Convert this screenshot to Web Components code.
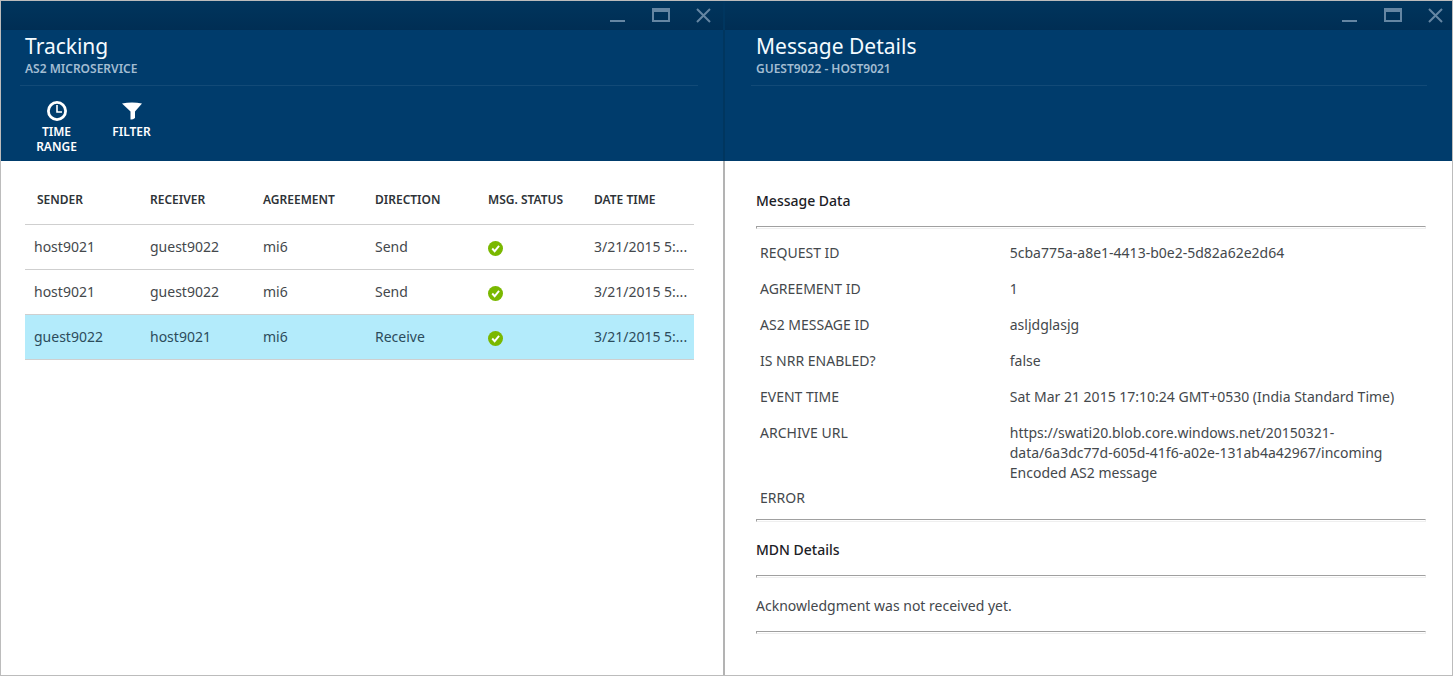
<!DOCTYPE html>
<html lang="en">
<head>
<meta charset="utf-8">
<title>Tracking</title>
<style>
  body { margin: 0; font-family: "Noto Sans", "Open Sans", sans-serif; font-size: 14px; line-height: 20px; color: #44484c; background: #fff; }
</style>
</head>
<body>
<portal-shell>
  <portal-blade heading="Tracking" subheading="AS2 MICROSERVICE" class="list">
    <command-button slot="commands" icon="clock">TIME RANGE</command-button>
    <command-button slot="commands" icon="filter">FILTER</command-button>
    <tracking-grid></tracking-grid>
  </portal-blade>
  <portal-blade heading="Message Details" subheading="GUEST9022 - HOST9021" class="details">
    <detail-section heading="Message Data"><message-data></message-data></detail-section>
    <detail-section heading="MDN Details"><mdn-status>Acknowledgment was not received yet.</mdn-status></detail-section>
  </portal-blade>
</portal-shell>

<script>
function define(name, render) {
  customElements.define(name, class extends HTMLElement {
    constructor() {
      super();
      this.attachShadow({ mode: 'open' }).innerHTML = render(this);
    }
  });
}

define('portal-shell', () => `
  <style>
    :host { display: flex; box-sizing: border-box; min-height: 100vh; border: 1px solid #bcbcbc; }
    ::slotted(portal-blade) { min-width: 0; flex: 727 1 0; }
    ::slotted(.list) { flex-grow: 724; --edge: 2px; --end: 29px; --controls-end: 12px; }
    ::slotted(.details) { --start: 31px; --end: 26px; --controls-end: 9px; --top: 30px; }
  </style>
  <slot></slot>`);

define('window-controls', () => `
  <style>
    :host { display: flex; justify-content: flex-end; align-items: center; gap: 26px; height: 29px; padding-right: var(--controls-end, 12px); background: linear-gradient(#00355d, #002e54); }
    button { display: block; padding: 0; border: 0; background: none; color: #6586a3; }
    svg { display: block; fill: none; stroke: currentColor; }
  </style>
  <button type="button" aria-label="Minimize"><svg width="17" height="16"><path d="M1 13h15" stroke-width="2"/></svg></button>
  <button type="button" aria-label="Maximize"><svg width="18" height="16"><path d="M1 1v12h16V1" stroke-width="2"/><path d="M0 2h18" stroke-width="4"/></svg></button>
  <button type="button" aria-label="Close"><svg width="15" height="16"><path d="M1 1l13 13M14 1L1 14" stroke-width="2"/></svg></button>`);

define('portal-blade', el => `
  <style>
    :host { display: flex; flex-direction: column; }
    header { background: #003c6c; border-right: var(--edge, 0px) solid #00365f; min-height: 160px; }
    .titles { margin: 0 25px 0 calc(var(--start, 24px) - 5px); padding: 3px 5px 7px; border-bottom: 1px solid #124a77; }
    h1 { margin: 0; font-size: 21px; line-height: 27px; font-weight: 400; color: #f4fbff; }
    p { margin: 0; font-size: 12px; line-height: 18px; font-weight: 600; color: #a3bdd2; }
    .commands { display: flex; padding: 14px 0 0 18px; }
    main { flex: 1; padding: var(--top, 14px) var(--end, 29px) 0 var(--start, 24px); border-right: var(--edge, 0px) solid #b3b3b3; }
  </style>
  <header>
    <window-controls></window-controls>
    <div class="titles"><h1>${el.getAttribute('heading')}</h1><p>${el.getAttribute('subheading')}</p></div>
    <div class="commands"><slot name="commands"></slot></div>
  </header>
  <main><slot></slot></main>`);

const commandIcons = {
  clock: '<circle cx="11" cy="11" r="8.6" fill="none" stroke="currentColor" stroke-width="2.8"/><path d="M11 5v7h5" fill="none" stroke="currentColor" stroke-width="1.6"/>',
  filter: '<path d="M1 3.5Q11 1.500 21 3.500L14 11.500V18Q11.500 20 9.500 19.500V11.500Z" fill="currentColor"/>'
};
define('command-button', el => `
  <style>
    :host { display: block; width: 75px; }
    button { display: flex; flex-direction: column; align-items: center; width: 100%; padding: 0 12px; border: 0; background: none; color: #fff; font: inherit; font-size: 12px; line-height: 15px; font-weight: 600; }
    svg { display: block; width: 22px; height: 22px; margin-bottom: 2px; }
  </style>
  <button type="button"><svg viewBox="0 0 22 22" aria-hidden="true">${commandIcons[el.getAttribute('icon')]}</svg><span><slot></slot></span></button>`);

define('status-ok', () => `
  <style>
    :host { display: block; padding-top: 2px; }
    svg { display: block; }
  </style>
  <svg width="15" height="15" viewBox="0 0 16 16" role="img" aria-label="Succeeded"><circle cx="8" cy="8" r="8" fill="#7ab800"/><path d="M4.500 8l2.600 2.900L11.800 5.200" fill="none" stroke="#fff" stroke-width="2"/></svg>`);

const messages = [
  ['host9021', 'guest9022', 'mi6', 'Send'],
  ['host9021', 'guest9022', 'mi6', 'Send'],
  ['guest9022', 'host9021', 'mi6', 'Receive']
];
define('tracking-grid', () => `
  <style>
    :host { display: block; }
    table { width: 100%; border-collapse: separate; border-spacing: 0; table-layout: fixed; }
    th, td { box-sizing: border-box; padding: 0 0 0 9px; text-align: left; white-space: nowrap; border-bottom: 1px solid #cfcfcf; }
    th { height: 50px; font-size: 12px; font-weight: 600; color: #2e3338; }
    th:first-child { padding-left: 12px; }
    td { height: 45px; }
    .selected td { background: #b3ebfb; color: #2c4c5c; }
  </style>
  <table>
    <colgroup><col style="width:116px"><col style="width:113px"><col style="width:112px"><col style="width:113px"><col style="width:106px"><col style="width:109px"></colgroup>
    <thead><tr>${['SENDER', 'RECEIVER', 'AGREEMENT', 'DIRECTION', 'MSG. STATUS', 'DATE TIME'].map(t => `<th scope="col">${t}</th>`).join('')}</tr></thead>
    <tbody>${messages.map((row, i) => `<tr${i === 2 ? ' class="selected"' : ''}>${row.map(t => `<td>${t}</td>`).join('')}<td><status-ok></status-ok></td><td>3/21/2015 5:...</td></tr>`).join('')}</tbody>
  </table>`);

define('detail-section', el => `
  <style>
    :host { display: block; }
    h2 { margin: 0; font-size: 14px; line-height: 20px; font-weight: 500; color: #1c2126; }
    hr { box-sizing: border-box; height: 3px; margin: 0; border: 1px solid #efefef; border-top-color: #a0a0a0; border-left-color: #a0a0a0; }
    .rule { margin-top: 15px; }
    .end { margin-bottom: 18px; }
  </style>
  <h2>${el.getAttribute('heading')}</h2>
  <hr class="rule">
  <slot></slot>
  <hr class="end">`);

const fields = [
  ['REQUEST ID', '5cba775a-a8e1-4413-b0e2-5d82a62e2d64'],
  ['AGREEMENT ID', '1'],
  ['AS2 MESSAGE ID', 'asljdglasjg'],
  ['IS NRR ENABLED?', 'false'],
  ['EVENT TIME', 'Sat Mar 21 2015 17:10:24 GMT+0530 (India Standard Time)'],
  ['ARCHIVE URL', 'https://swati20.blob.core.windows.net/20150321-\ndata/6a3dc77d-605d-41f6-a02e-131ab4a42967/incoming\nEncoded AS2 message'],
  ['ERROR', '']
];
define('message-data', () => `
  <style>
    :host { display: block; padding: 14px 0 11px 4px; }
    dl { margin: 0; }
    div { display: grid; grid-template-columns: 3fr 5fr; padding-bottom: 16px; }
    div:nth-last-child(2) { padding-bottom: 5px; }
    div:last-child { padding-bottom: 0; }
    dt, dd { margin: 0; }
    dd { white-space: pre-line; }
  </style>
  <dl>${fields.map(([k, v]) => `<div><dt>${k}</dt><dd>${v}</dd></div>`).join('')}</dl>`);

define('mdn-status', () => `
  <style>:host { display: block; padding: 18px 0 15px; }</style>
  <slot></slot>`);
</script>
</body>
</html>
